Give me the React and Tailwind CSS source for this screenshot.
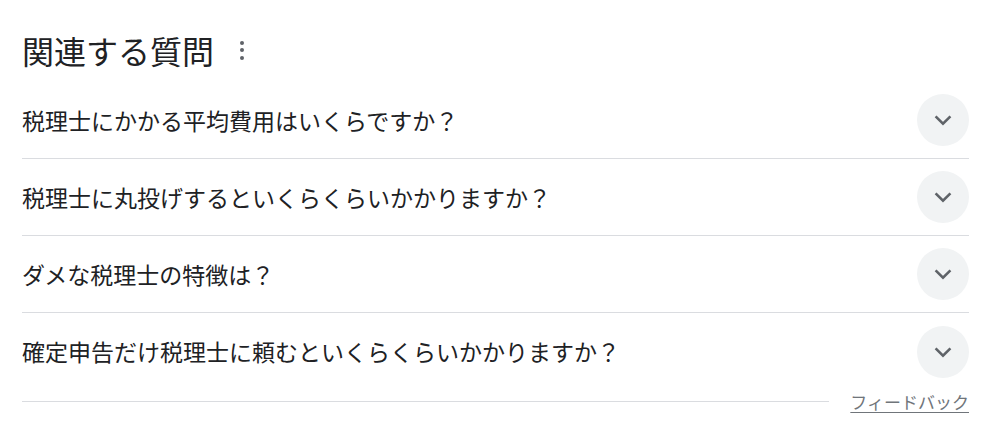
import React from "react";

const questions = [
  "税理士にかかる平均費用はいくらですか？",
  "税理士に丸投げするといくらくらいかかりますか？",
  "ダメな税理士の特徴は？",
  "確定申告だけ税理士に頼むといくらくらいかかりますか？",
];

function Chevron() {
  return (
    <svg width="24" height="24" viewBox="0 0 24 24" fill="none">
      <path
        d="M4.6 8.4 12 15.6l7.4-7.2"
        stroke="#5f6368"
        strokeWidth="2.6"
        strokeLinecap="butt"
        strokeLinejoin="miter"
      />
    </svg>
  );
}

export default function App() {
  return (
    <div
      className="w-[1000px] h-[437px] bg-white pl-[22px] text-[#202124]"
      style={{ fontFamily: '"Noto Sans CJK JP", "Noto Sans", sans-serif' }}
    >
      <div className="w-[947px]">
        <div className="h-[82px] pt-[18px] flex items-center">
          <span className="text-[32px] leading-none">関連する質問</span>
          <div className="ml-[26px] flex flex-col gap-[3.5px] items-center">
            <span className="w-[4px] h-[4px] rounded-full bg-[#5f6368]" />
            <span className="w-[4px] h-[4px] rounded-full bg-[#5f6368]" />
            <span className="w-[4px] h-[4px] rounded-full bg-[#5f6368]" />
          </div>
        </div>
        {questions.map((q, i) => (
          <div
            key={i}
            className={
              "h-[77px] flex items-center justify-between " +
              (i < questions.length - 1 ? "border-b border-[#dadce0]" : "")
            }
          >
            <span className="text-[23px] leading-none">{q}</span>
            <div className="w-[52px] h-[52px] rounded-full bg-[#f1f3f4] flex items-center justify-center">
              <Chevron />
            </div>
          </div>
        ))}
        <div className="flex items-center gap-[21px] h-[20px] mt-[1px]">
          <div className="flex-1 h-px bg-[#dadce0]" />
          <a className="text-[17px] leading-none text-[#70757a] underline underline-offset-[3px]">
            フィードバック
          </a>
        </div>
      </div>
    </div>
  );
}
